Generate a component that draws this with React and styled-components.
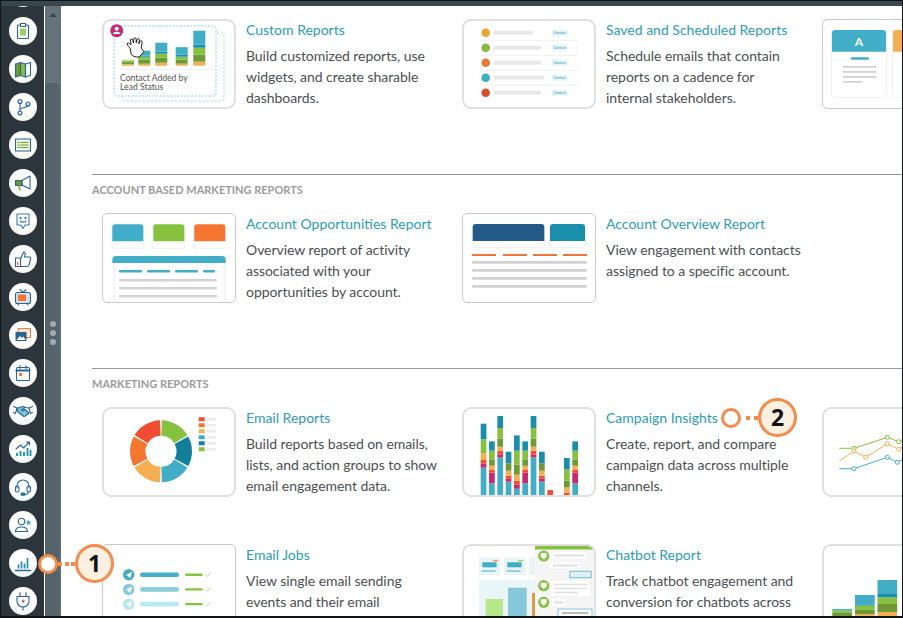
import React from "react";
import styled, { createGlobalStyle } from "styled-components";

const Global = createGlobalStyle`
  html, body { margin: 0; padding: 0; background: #fff; }
  body { font-family: Lato, "Open Sans", sans-serif; }
`;

const C = {
  teal: "#41adc6", dteal: "#1a8fab", green: "#86c240", dgreen: "#6d9a36", lorange: "#f5ae52",
  orange: "#f4762f", red: "#f24c33", mag: "#c22a72", navy: "#245a87", gray: "#d2d2d2", ink: "#2a6496",
};

const Frame = styled.div`
  position: relative; width: 903px; height: 618px; box-sizing: border-box;
  border: 1px solid #101417; border-bottom-width: 2px; overflow: hidden; display: flex; flex-direction: column; background: #fff;
`;
const TopBar = styled.div`height: 5px; flex: none; background: #38474f;`;
const Body = styled.div`flex: 1; display: flex; min-height: 0;`;
const Sidebar = styled.nav`
  width: 43px; flex: none; background: #2b353b; border-right: 1px solid #fff; overflow: hidden;
  display: flex; flex-direction: column; align-items: center; gap: 10px; margin: 0;
`;
const NavBubble = styled.div`
  width: 28px; height: 28px; flex: none; border-radius: 50%; display: flex; align-items: center; justify-content: center;
  background: radial-gradient(circle at 50% 38%, #fff 52%, ${p => p.$tint} 100%);
  &:first-child { margin-top: -27px; }
`;
const Scrollbar = styled.div`width: 16px; flex: none; display: flex; flex-direction: column; background: #55646b;`;
const ScrollThumb = styled.div`height: 77px; flex: none; background: #64737a; display: flex; justify-content: center; padding-top: 7px; box-sizing: border-box;`;
const ScrollArrow = styled.div`width: 0; height: 0; border: 4px solid transparent; border-top: 0; border-bottom: 4px solid #38474f;`;
const Track = styled.div`flex: 1; display: flex; flex-direction: column; align-items: center; gap: 3px; padding-top: 238px; border-right: 2px solid #5f6e75; box-sizing: border-box; padding-left: 2px;`;
const GripDot = styled.span`width: 6px; height: 6px; border-radius: 50%; background: #a3abaf;`;

const Main = styled.main`flex: 1; min-width: 0; overflow: hidden; padding: 13px 0 0 31px; box-sizing: border-box;`;
const Section = styled.section`margin-top: 65px; &:first-child { margin-top: 0; }`;
const Rule = styled.hr`margin: 0 0 8px; border: 0; border-top: 1px solid #9a9a9a;`;
const SectionLabel = styled.h2`margin: 0 0 16px; font: 700 11px/14px Lato, sans-serif; color: #9b9b9b; text-transform: uppercase;`;
const CardGrid = styled.div`display: grid; grid-template-columns: repeat(3, 360px); row-gap: 47px; margin-left: 10px;`;
const Card = styled.article`display: flex; gap: 10px; align-items: flex-start; width: 360px;`;
const Thumb = styled.div`
  width: 134px; height: 90px; flex: none; box-sizing: border-box; overflow: hidden; background: #fff;
  border: ${p => p.$thin ? "1px solid #c9c9c9" : "2px solid #e0e0e0"};
  padding: ${p => p.$thin ? 1 : 0}px;
  border-radius: ${p => p.$thin ? 5 : 9}px;
  svg { display: block; width: 130px; height: 86px; }
`;
const CardText = styled.div`width: 196px;`;
const CardTitle = styled.a`display: block; font: 400 14px/21px Lato, sans-serif; white-space: nowrap; color: #2d9cb4; margin-bottom: 5px;`;
const CardDesc = styled.p`margin: 0; font: 400 14px/21px Lato, sans-serif; letter-spacing: -0.05px; color: #4b4f53;`;

const Marker = styled.div`
  position: absolute; left: ${p => p.$x}px; top: ${p => p.$y}px; display: flex; align-items: center;
`;
const Ring = styled.span`width: 20px; height: 20px; box-sizing: border-box; border-radius: 50%; background: #fff; border: 3px solid #f58b4c; flex: none;`;
const Dots = styled.span`width: 17px; flex: none; display: flex; justify-content: flex-end; gap: ${p => p.$gap}px; box-sizing: border-box;`;
const Dot = styled.i`width: 4px; height: 4px; flex: none; background: #f58b4c;`;
const Badge = styled.span`
  width: 39px; height: 39px; box-sizing: border-box; flex: none; border-radius: 50%; background: #fdf0e1; border: 3px solid #f58b4c;
  display: flex; align-items: center; justify-content: center; font: 700 23px/1 "Open Sans", Lato, sans-serif; color: #111;
`;

const S = { fill: "none", stroke: C.ink, strokeWidth: 1.1, strokeLinejoin: "round", strokeLinecap: "round" };
const Ico = ({ children }) => <svg width="20" height="20" viewBox="0 0 20 20">{children}</svg>;

const navIcons = [
  { tint: "#e4efd9", d: <g {...S}><rect x="5" y="4" width="10" height="13" /></g> },
  { tint: "#e4efd9", d: <g {...S}><rect x="4.500" y="4" width="11" height="13.500" rx="1" /><rect x="7.500" y="2.500" width="5" height="3" fill="#fff" /><rect x="7" y="7.500" width="6" height="7" fill={C.green} stroke="none" opacity=".8" /></g> },
  { tint: "#e4efd9", d: <g {...S}><path d="M2.500 5l5-1.500v13l-5 1.500z" fill={C.dgreen} /><path d="M7.500 3.500l5 1.500v13l-5-1.500z" fill={C.green} /><path d="M12.500 5l5-1.500v13l-5 1.500z" /></g> },
  { tint: "#e4efd9", d: <g {...S}><circle cx="7" cy="4.500" r="2" fill="#dbe9cf" /><circle cx="7" cy="16" r="2" fill="#dbe9cf" /><circle cx="15" cy="7" r="2" fill="#dbe9cf" /><path d="M7 6.500V14M7 13c0-3 7-2 8-4" /></g> },
  { tint: "#e4efd9", d: <g {...S}><rect x="2.500" y="4" width="15" height="12" fill="#eef6e4" /><path d="M5 7.500h1.500M8 7.500h7M5 10h1.500M8 10h7M5 12.500h1.500M8 12.500h7" stroke={C.dgreen} /></g> },
  { tint: "#e4efd9", d: <g {...S}><path d="M9 7.500L17 3v13l-8-4z" /><rect x="2.500" y="7.500" width="6.500" height="5" fill={C.dgreen} stroke={C.ink} /><path d="M5 12.500l1 5h2l-1-5z" fill={C.green} stroke="none" /></g> },
  { tint: "#fae9db", d: <g {...S} stroke="#3f7ba8"><path d="M4 3h12v11h-4l-2 3.500L8 14H4z" /><circle cx="7.500" cy="7" r=".6" /><circle cx="12.500" cy="7" r=".6" /><path d="M7 10c1.500 1.500 4.500 1.500 6 0" /></g> },
  { tint: "#fae9db", d: <g {...S}><rect x="2.500" y="9" width="5" height="8.500" /><path d="M7.500 10l3-7c1.500 0 2 1.500 1.500 3l-.5 2h5c1 0 1.500 1 1 2l-1.500 6c-.2 1-1 1.500-2 1.500H7.500" /><rect x="4" y="13" width="1.500" height="3" fill={C.orange} stroke="none" /></g> },
  { tint: "#fae9db", d: <g {...S}><path d="M7 2.500l3 3 3-3" /><rect x="2.500" y="5.500" width="15" height="11" rx="2" fill="#d5e2ea" /><rect x="5" y="7.500" width="8" height="6.500" fill={C.orange} stroke="none" /><path d="M5 18l1-1.500M15 18l-1-1.500" /></g> },
  { tint: "#fae9db", d: <g {...S} strokeWidth="1"><rect x="5.500" y="3.500" width="12" height="9" fill="#fbe7d6" stroke={C.orange} /><rect x="2.500" y="7" width="11" height="9" fill={C.ink} stroke="none" /><path d="M3.500 15l3.500-4 2 2 1.500-1.500 2 3.500z" fill="#fff" stroke="none" /></g> },
  { tint: "#fae9db", d: <g {...S}><rect x="3.500" y="4.500" width="13" height="13" rx="1" /><path d="M3.500 7.500h13" strokeWidth="2.200" /><path d="M7 2.500v3M13 2.500v3" /><rect x="6" y="10" width="3" height="3" fill={C.orange} stroke="none" /></g> },
  { tint: "#d7ecf1", d: <g {...S}><path d="M0.500 5.500l3.500 1.500-1.500 5.500-2-1M19.500 5.500L16 7l1.500 5.500 2-1" /><path d="M4 7c2.500.5 3.500-1.500 6-1.500 1 0 1.500.5 2 1l-3.500 2.500c1 1 2.500.5 3.500-.5l4 3.500-1.500 1.500-.5-.2-.5 1-1 .2-.5.8-1.200.2-1-.8L5 11z" fill="#7ec5d8" /><path d="M12 6.500c1.500 0 2.500.5 4 .5" /></g> },
  { tint: "#d7ecf1", d: <g {...S}><path d="M3 10l4.500-4 3 3 6-6M13.500 3h3v3" /><path d="M4 17v-3M7.500 17v-5M11 17v-4M14.500 17V9M17.500 17v-6" stroke={C.dteal} strokeWidth="1.800" strokeLinecap="butt" /></g> },
  { tint: "#d7ecf1", d: <g {...S}><path d="M4 11V9a6 6 0 0112 0v2" /><rect x="2.500" y="9" width="3.500" height="6" rx="1.500" /><rect x="14" y="9" width="3.500" height="6" rx="1.500" /><path d="M15.500 15c0 2-2 2.500-4 2.500" /><rect x="8" y="16" width="4" height="2.200" rx="1" fill={C.dteal} /></g> },
  { tint: "#d7ecf1", d: <g {...S}><circle cx="8.500" cy="6.500" r="3.200" /><path d="M2.500 16.500c0-3.500 2.500-4.500 6-4.500s6 1 6 4.500z" /><path d="M15.500 4.500l.9 1.900 2 .3-1.500 1.400.4 2-1.800-1-1.800 1 .4-2-1.500-1.400 2-.3z" fill={C.teal} stroke="none" /></g> },
  { tint: "#d7ecf1", d: <g {...S}><path d="M5.500 15.500v-4M8.500 15.500v-7M11.500 15.500v-5M14.500 15.500V5" stroke={C.dteal} strokeWidth="1.700" strokeLinecap="butt" /><path d="M2.500 17.500h15" stroke={C.ink} strokeWidth="1.500" /></g> },
  { tint: "#e8dff2", d: <g {...S}><path d="M7 1.500v4M13 1.500v4" /><path d="M4 5.500h12v4.500a6 6 0 01-12 0z" /><path d="M10 16v3" /><path d="M11 7l-2.500 4h2L9 14l3-4.500h-2z" fill={C.mag} stroke="none" /></g> },
];

const Stack = ({ x, w, bottom, parts }) => {
  let y = bottom;
  return parts.map(([h, col], i) => {
    y -= h;
    return <rect key={i} x={x} y={y} width={w} height={h} fill={col} />;
  });
};

const CustomArt = () => (
  <svg viewBox="0 0 130 86">
    <rect x="19" y="12" width="101" height="68" rx="2" fill="none" stroke="#9fd5e2" strokeDasharray="2 2" />
    <rect x="10" y="5" width="102" height="70" rx="3" fill="#fff" stroke="#8fd0de" strokeDasharray="2 1.500" />
    <Stack x={18} w={12} bottom={44.700} parts={[[1.500, C.lorange], [2, C.dgreen], [1.500, C.green], [1, "#b9d98c"]]} />
    <Stack x={34.300} w={12} bottom={44.700} parts={[[2, C.lorange], [4, C.dgreen], [3, C.green], [1, C.dteal], [5, C.teal]]} />
    <Stack x={51.300} w={12} bottom={44.700} parts={[[3, C.lorange], [5, C.dgreen], [4, C.green], [2, C.dteal], [9, C.teal]]} />
    <Stack x={71.700} w={12} bottom={44.700} parts={[[2, C.lorange], [4, C.dgreen], [3, C.green], [2, C.dteal], [7.500, C.teal]]} />
    <Stack x={89.300} w={12} bottom={44.700} parts={[[4, C.lorange], [7, C.dgreen], [7, C.green], [3, C.dteal], [14, C.teal]]} />
    <path d="M16 48.300h94" stroke="#eee" />
    <text x="16" y="59.500" fontSize="8.600" fill="#555" fontFamily="Lato, sans-serif">Contact Added by</text>
    <text x="16" y="69" fontSize="8.600" fill="#555" fontFamily="Lato, sans-serif">Lead Status</text>
    <circle cx="12.700" cy="9.700" r="6.500" fill="#c22a72" />
    <circle cx="12.700" cy="7.800" r="2" fill="#fff" /><path d="M9 13c0-3 7.400-3 7.400 0z" fill="#fff" />
    <path d="M26 27c-2-2-3.600-4-2.600-5 1-.6 2.600 1 3.600 2l-.6-5c0-1.600 2-1.600 2.400 0l.6 3 .4-4c.2-1.600 2.200-1.400 2.400 0v4l1-3.600c.4-1.400 2.400-1 2.200.4l-.6 4 1.400-2.400c.8-1.200 2.400-.6 2 .8l-1 5.800 2.600 3.600-4.600 5.400c-4 .4-7-1-8-3z" fill="#fff" stroke="#222" strokeWidth="1" strokeLinejoin="round" />
  </svg>
);

const SavedArt = () => {
  const rows = [["#eda532", 39], ["#86b93d", 47], ["#ec7833", 47], ["#3bb0c0", 50], ["#d94f2b", 47]];
  return (
    <svg viewBox="0 0 130 86">
      {rows.map(([c, w], i) => (
        <g key={i}>
          <circle cx="21.700" cy={11.700 + i * 15} r="4.300" fill={c} />
          <rect x="30" y={9.700 + i * 15} width={w} height="4" fill="#e8e8e8" />
          <rect x="87.700" y={8.700 + i * 15} width="16" height="6" rx="1" fill="#e4f4f7" />
          <text x="95.700" y={13 + i * 15} fontSize="3.600" textAnchor="middle" fill="#3b9db3" fontFamily="Lato, sans-serif">Contact</text>
          {i < 4 && <path d={`M16 ${19.300 + i * 15}h99`} stroke="#f0f0f0" />}
        </g>
      ))}
    </svg>
  );
};

const MiniCard = ({ x, y, w, h, head, color }) => (
  <g>
    <rect x={x - 1} y={y} width={w + 2} height={h + 1} rx="3" fill="#f1f1f1" />
    <rect x={x} y={y} width={w} height={h} rx="3" fill="#fff" />
    <path d={`M${x} ${y + head}v${3 - head}a3 3 0 013-3h${w - 6}a3 3 0 013 3v${head - 3}z`} fill={color} />
  </g>
);

const OppArt = () => (
  <svg viewBox="0 0 130 86">
    <MiniCard x={8.300} y={9.300} w={31} h={24} head={17} color={C.teal} />
    <MiniCard x={49.300} y={9.300} w={31} h={24} head={17} color={C.green} />
    <MiniCard x={90.300} y={9.300} w={31} h={24} head={17} color="#f6762f" />
    <rect x="9" y="41" width="112.700" height="50" fill="#f4f4f4" />
    <rect x="11" y="46" width="108.500" height="45" fill="#fff" />
    <path d="M8.300 48v-3a4 4 0 014-4h105.400a4 4 0 014 4v3z" fill={C.teal} />
    {[[15, 23], [43, 23], [71, 23], [99, 12]].map(([x, w]) => <rect key={x} x={x} y="55" width={w} height="2.400" rx="1" fill={C.teal} />)}
    {[64, 72, 80].map(y => <rect key={y} x="15" y={y} width="98" height="2.400" rx="1" fill={C.gray} />)}
  </svg>
);

const OverviewArt = () => (
  <svg viewBox="0 0 130 86">
    <MiniCard x={8.700} y={9} w={71.600} h={23} head={17} color={C.navy} />
    <MiniCard x={86} y={9} w={35} h={23} head={17} color={C.dteal} />
    {[8, 39, 69, 99].map(x => <rect key={x} x={x} y="39" width="24" height="2" fill="#f0763a" />)}
    {[46, 54, 62, 70].map(y => <rect key={y} x="8" y={y} width="115" height="2.800" rx="1" fill={C.gray} />)}
  </svg>
);

const polar = (r, a) => {
  const t = (a - 90) * Math.PI / 180;
  return [57 + r * Math.cos(t), 42.300 + r * Math.sin(t)];
};
const seg = (a, b) => {
  const [x1, y1] = polar(31, a), [x2, y2] = polar(31, b), [x3, y3] = polar(15.500, b), [x4, y4] = polar(15.500, a);
  return `M${x1} ${y1}A31 31 0 0 1 ${x2} ${y2}L${x3} ${y3}A15.500 15.500 0 0 0 ${x4} ${y4}Z`;
};
const DonutArt = () => {
  const cols = [C.green, "#127f9b", C.teal, C.lorange, C.orange, C.red];
  const leg = [C.red, C.orange, C.lorange, C.teal, "#127f9b", C.green];
  return (
    <svg viewBox="0 0 130 86">
      {cols.map((c, i) => <path key={c} d={seg(i * 60 + 1.500, i * 60 + 58.500)} fill={c} />)}
      {leg.map((c, i) => (
        <g key={c}>
          <rect x="94.700" y={8.300 + i * 6} width="6" height="4" rx=".6" fill={c} />
          <rect x="102" y={9 + i * 6} width="10" height="2.600" fill="#ececec" />
        </g>
      ))}
    </svg>
  );
};

const T = C.teal, M = C.mag, R = C.red, O = C.lorange, D = C.dgreen, G = C.green, K = C.dteal;
const barsA = [[84, T], [13, M], [10, R], [20, O], [42, G], [47, K]];
const barsB = [[37, T], [32, M], [8, R], [13, O], [19, D], [26, G], [28, K]];
const barsC = [[115, T], [9, M], [11, R], [12, O], [24, D], [32, G], [36, K]];
const barsD = [[42, T], [9, M], [9, R], [15, O], [22, D], [35, K]];
const barsE = [[21, T], [12, M], [12, R], [18, O], [30, D], [42, G], [46, K]];
const campaign = [barsA, barsB, barsC, barsD, barsE, barsB, barsC, barsD, [[17, R]], null, [[9, R], [16, O], [20, D], [34, G], [34, K]], barsB];
const CampaignArt = () => (
  <svg viewBox="0 0 130 86">
    {campaign.map((b, i) => b && (
      <Stack key={i} x={16.700 + i * 8.330} w={5.700} bottom={86.700} parts={b.map(([h, c]) => [h / 3, c])} />
    ))}
  </svg>
);

const LineSeries = ({ pts, color }) => (
  <g fill="#fff" stroke={color} strokeWidth="1">
    <polyline points={pts.map(p => p.join(",")).join(" ")} fill="none" />
    {pts.slice(1).map(p => <circle key={p[0]} cx={p[0]} cy={p[1]} r="2" />)}
  </g>
);
const LinesArt = () => (
  <svg viewBox="0 0 130 86">
    <LineSeries color={C.green} pts={[[15.300, 39.300], [30, 39.300], [63.300, 28.300], [74.700, 32.700], [95, 22]]} />
    <LineSeries color={C.lorange} pts={[[15.300, 52], [30, 42], [41.700, 48.300], [63.300, 34.700], [74.700, 40.300], [95, 28]]} />
    <LineSeries color={C.teal} pts={[[15.300, 59.700], [30, 59.700], [63.300, 48.300], [73.300, 53.300], [95, 42]]} />
  </svg>
);

const LetterArt = () => (
  <svg viewBox="0 0 130 86">
    <MiniCard x={8} y={9} w={54} h={67} head={21.700} color={C.teal} />
    <MiniCard x={69} y={9} w={54} h={67} head={21.700} color={C.lorange} />
    <text x="35" y="25" textAnchor="middle" fontSize="12" fontWeight="700" fill="#fff" fontFamily="Lato, sans-serif">A</text>
    <rect x="26.700" y="36.300" width="18.300" height="2.400" rx="1.200" fill={C.teal} />
    {[[45, 33], [50, 33], [55, 33], [60, 19]].map(([y, w]) => <rect key={y} x="19" y={y} width={w} height="1.800" fill={C.gray} />)}
  </svg>
);

const JobsArt = () => {
  const rows = [[C.teal, "#45afc8"], ["#86cadb", "#8accdc"], ["#b5e6f2", "#b8e8f3"]];
  return (
    <svg viewBox="0 0 130 86">
      {rows.map(([c, b], i) => {
        const y = 28.700 + i * 14.700;
        return (
          <g key={i}>
            <circle cx="24.700" cy={y} r="5.700" fill={c} />
            <path d={`M21.500 ${y + .5}l6.500-3.500-1.500 6.500-1.500-2-1 1.500v-2z`} fill="#fff" />
            <rect x="36" y={y - 2.300} width="39" height="4.600" rx="2.300" fill={b} />
            <rect x="81" y={y - 1.200} width="17.700" height="2.400" rx="1.200" fill={C.green} />
            <path d={`M102 ${y + .3}l1.500 1.500 3-3.500`} fill="none" stroke="#a9d27a" strokeWidth=".8" />
          </g>
        );
      })}
    </svg>
  );
};

const Shield = ({ y }) => (
  <g>
    <circle cx="79.700" cy={y} r="5.600" fill={C.green} />
    <path d={`M76.700 ${y - 3}h6v3.500l-3 3-3-3z`} fill="#fff" />
  </g>
);
const ChatArt = () => (
  <svg viewBox="0 0 130 86">
    <rect x="15" y="11.700" width="21" height="17.300" fill="#eaf4f7" />
    <rect x="18.300" y="16.300" width="14.300" height="5" fill={C.teal} />
    <rect x="29" y="14.300" width="5.300" height="1" fill={C.orange} />
    <rect x="17.500" y="24.500" width="14" height="1" fill={C.teal} />
    <rect x="40" y="11.700" width="21.700" height="17.300" fill="#eaf4f7" />
    <rect x="43.300" y="16.300" width="14.300" height="5" fill={C.teal} />
    <rect x="54" y="14.300" width="5.300" height="1" fill={C.green} />
    <rect x="42.500" y="24.500" width="14" height="1" fill={C.teal} />
    <rect x="65" y="11.700" width="10" height="17.300" fill="#eaf4f7" />
    <rect x="15" y="34" width="60" height="60" fill="#eaf5f8" />
    <rect x="21.700" y="53" width="17.300" height="40" fill="#b5e88a" />
    <rect x="44" y="41.700" width="18.700" height="50" fill="#86c8da" />
    <rect x="68" y="47" width="6" height="40" fill="#e09a45" />
    <rect x="71" y="0" width="59" height="86" fill="#f5f5f5" />
    <rect x="71" y="0" width="59" height="3.500" fill={C.green} />
    <Shield y={10} /><Shield y={39.700} /><Shield y={56.300} />
    <rect x="87" y="6" width="36" height="6.500" fill="#fff" />
    <rect x="90" y="8.500" width="30" height="2" fill="#e0e0e0" />
    <rect x="86" y="16" width="30" height="6.500" fill="#fff" />
    <rect x="89" y="18.500" width="24" height="2" fill="#e0e0e0" />
    <rect x="106" y="25.500" width="21" height="6" fill="#fff" stroke="#86c8da" strokeWidth="1.500" />
    <rect x="109" y="27.500" width="15" height="2" fill="#cbe7ef" />
    <rect x="87" y="35" width="39" height="15" fill="#fff" />
    <path d="M90 38.500h33M90 42.500h33M90 46.500h24" stroke="#e0e0e0" strokeWidth="1.500" />
    <rect x="87" y="53" width="14" height="7" fill="#fff" />
    <rect x="90" y="55.500" width="9" height="2" fill="#ddd" />
    <rect x="94" y="63" width="34" height="8" fill="#fff" stroke="#86c8da" />
    <rect x="98" y="66" width="26" height="2" fill="#bbb" />
  </svg>
);

const GrowthArt = () => (
  <svg viewBox="0 0 130 86">
    <Stack x={8.300} w={19.700} bottom={90} parts={[[19, C.lorange], [4.700, C.dgreen], [2, C.green], [1.300, C.teal]]} />
    <Stack x={31} w={19.700} bottom={90} parts={[[21.800, C.lorange], [4.300, C.dgreen], [4.300, C.green], [1.300, C.dteal], [9.300, C.teal]]} />
    <Stack x={53.500} w={19.700} bottom={90} parts={[[24, C.lorange], [8, C.dgreen], [6.700, C.green], [3.300, C.dteal], [14, C.teal]]} />
    <Stack x={78.500} w={19.700} bottom={90} parts={[[24, C.lorange], [8, C.dgreen], [6.700, C.green], [3.300, C.dteal], [10, C.teal]]} />
  </svg>
);

const topCards = [
  { art: <CustomArt />, title: "Custom Reports", desc: "Build customized reports, use widgets, and create sharable dashboards." },
  { art: <SavedArt />, title: "Saved and Scheduled Reports", desc: "Schedule emails that contain reports on a cadence for internal stakeholders." },
  { art: <LetterArt />, thin: true },
];
const abmCards = [
  { art: <OppArt />, thin: true, title: "Account Opportunities Report", desc: "Overview report of activity associated with your opportunities by account." },
  { art: <OverviewArt />, thin: true, title: "Account Overview Report", desc: "View engagement with contacts assigned to a specific account." },
];
const marketingCards = [
  { art: <DonutArt />, title: "Email Reports", desc: "Build reports based on emails, lists, and action groups to show email engagement data." },
  { art: <CampaignArt />, title: "Campaign Insights", desc: "Create, report, and compare campaign data across multiple channels." },
  { art: <LinesArt /> },
  { art: <JobsArt />, thin: true, title: "Email Jobs", desc: "View single email sending events and their email" },
  { art: <ChatArt />, title: "Chatbot Report", desc: "Track chatbot engagement and conversion for chatbots across" },
  { art: <GrowthArt /> },
];

const Cards = ({ items }) => (
  <CardGrid>
    {items.map((c, i) => (
      <Card key={i}>
        <Thumb $thin={c.thin}>{c.art}</Thumb>
        {c.title && (
          <CardText>
            <CardTitle>{c.title}</CardTitle>
            <CardDesc>{c.desc}</CardDesc>
          </CardText>
        )}
      </Card>
    ))}
  </CardGrid>
);

export default function App() {
  return (
    <Frame>
      <Global />
      <TopBar />
      <Body>
        <Sidebar>
          {navIcons.map((n, i) => <NavBubble key={i} $tint={n.tint}><Ico>{n.d}</Ico></NavBubble>)}
        </Sidebar>
        <Scrollbar>
          <ScrollThumb><ScrollArrow /></ScrollThumb>
          <Track><GripDot /><GripDot /><GripDot /></Track>
        </Scrollbar>
        <Main>
          <Section><Cards items={topCards} /></Section>
          <Section>
            <Rule />
            <SectionLabel>Account Based Marketing Reports</SectionLabel>
            <Cards items={abmCards} />
          </Section>
          <Section>
            <Rule />
            <SectionLabel>Marketing Reports</SectionLabel>
            <Cards items={marketingCards} />
          </Section>
        </Main>
      </Body>
      <Marker $x={37} $y={543}>
        <Ring /><Dots $gap={2.500}><Dot /><Dot /><Dot /></Dots><Badge>1</Badge>
      </Marker>
      <Marker $x={720} $y={397}>
        <Ring /><Dots $gap={4}><Dot /><Dot /></Dots><Badge>2</Badge>
      </Marker>
    </Frame>
  );
}
